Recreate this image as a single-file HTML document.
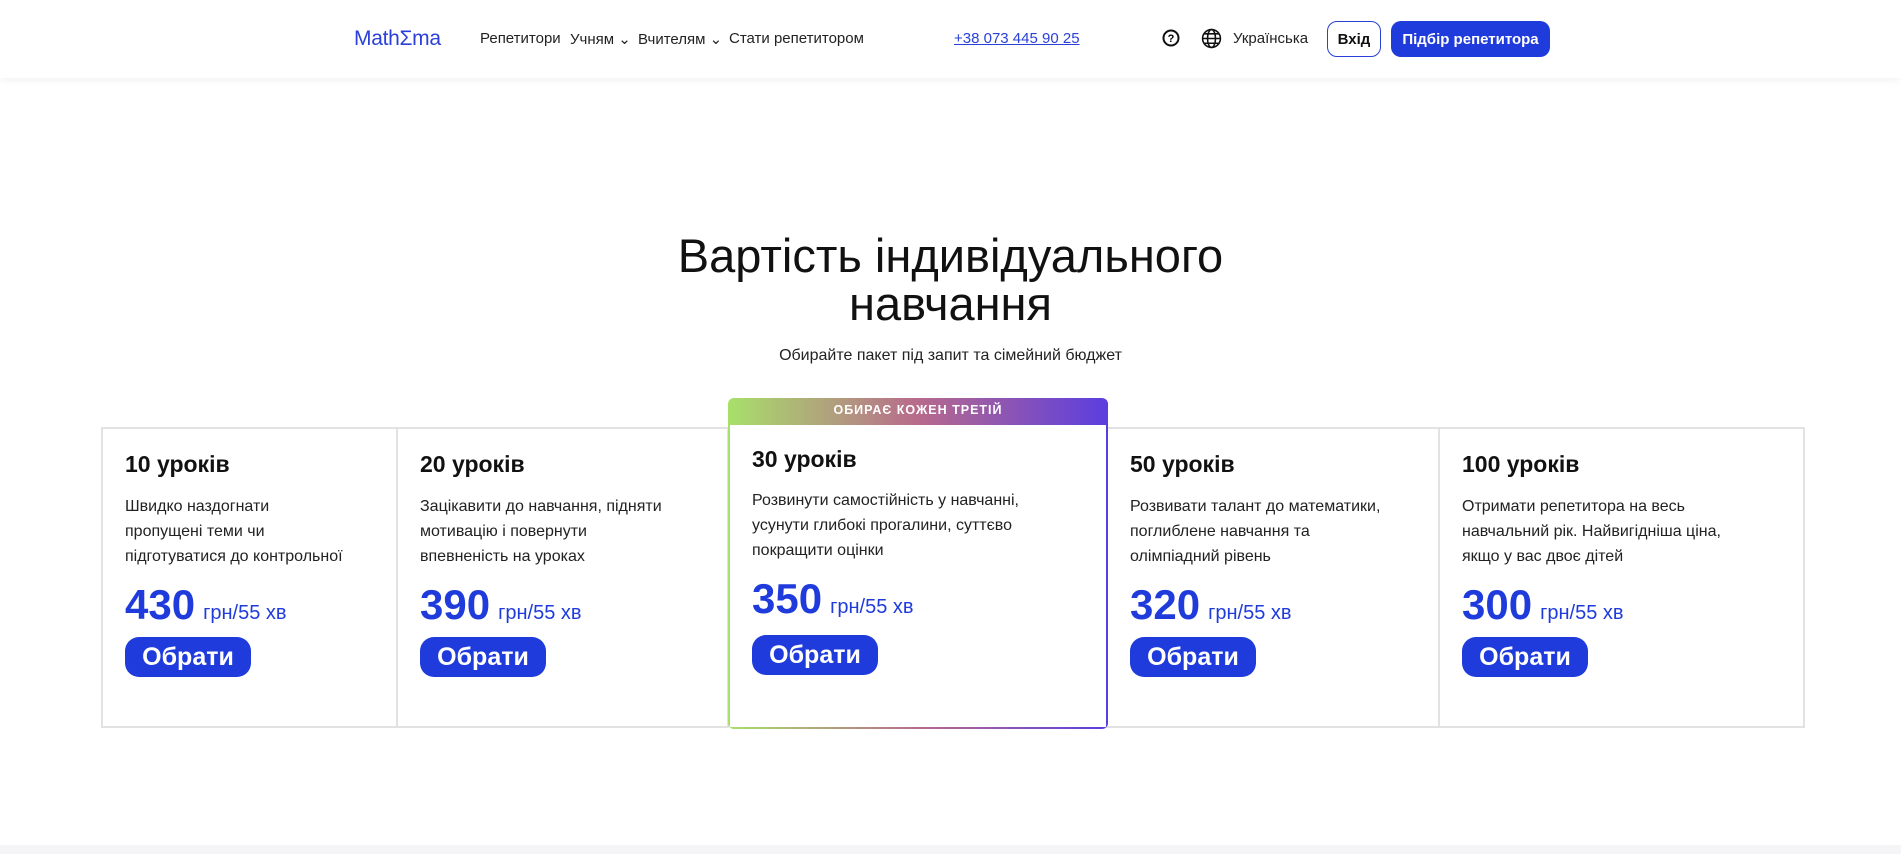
<!DOCTYPE html>
<html><head><meta charset="utf-8"><style>
*{margin:0;padding:0;box-sizing:border-box}
body{width:1901px;height:854px;background:#fff;font-family:"Liberation Sans","Noto Sans CJK SC",sans-serif;color:#111;position:relative;overflow:hidden}
.hdr{position:absolute;left:0;top:0;width:1901px;height:78px;background:#fff;box-shadow:0 2px 8px rgba(0,0,0,.06)}
.a{position:absolute;white-space:nowrap}
.nav{font-size:15px;color:#222;top:30px}
.btn{position:absolute;border-radius:10px;font-size:15px;font-weight:bold;display:flex;align-items:center;justify-content:center}
.card{position:absolute;top:427px;height:301px;border:2px solid #e2e2e2;background:#fff}
.card h3{position:absolute;left:22px;top:22px;font-size:23px;font-weight:bold;color:#111}
.card p{position:absolute;left:22px;top:65px;font-size:16px;line-height:25px;color:#222;width:300px}
.price{position:absolute;left:22px;top:152px;color:#1f3bdc;white-space:nowrap}
.price b{font-size:42px}
.price span{font-size:20px;margin-left:8px}
.ob{position:absolute;left:22px;top:208px;width:126px;height:40px;border-radius:14px;background:#1f3bdc;color:#fff;font-size:25px;font-weight:bold;display:flex;align-items:center;justify-content:center}
</style></head><body>
<div class="hdr">
<div class="a" style="left:354px;top:27px;font-size:21px;color:#2a40d8;letter-spacing:-0.3px">MathΣma</div>
<div class="a nav" style="left:480px">Репетитори</div>
<div class="a nav" style="left:570px">Учням ⌄</div>
<div class="a nav" style="left:638px">Вчителям ⌄</div>
<div class="a nav" style="left:729px">Стати репетитором</div>
<div class="a nav" style="left:954px;color:#2a40d8;text-decoration:underline">+38 073 445 90 25</div>
<svg class="a" style="left:1162px;top:29px" width="18" height="18" viewBox="0 0 18 18"><circle cx="9" cy="9" r="7.5" fill="none" stroke="#111" stroke-width="2"/><text x="9" y="13" font-size="11" font-weight="bold" text-anchor="middle" font-family="Liberation Sans">?</text></svg>
<svg class="a" style="left:1201px;top:28px" width="21" height="21" viewBox="0 0 20 20" fill="none" stroke="#111" stroke-width="1.5"><circle cx="10" cy="10" r="8.5"/><ellipse cx="10" cy="10" rx="3.8" ry="8.5"/><path d="M1.5 10h17M3 5.5h14M3 14.5h14"/></svg>
<div class="a nav" style="left:1233px">Українська</div>
<div class="btn" style="left:1327px;top:21px;width:54px;height:36px;border:1.5px solid #2a40d8;color:#111">Вхід</div>
<div class="btn" style="left:1391px;top:21px;width:159px;height:36px;background:#1f3bdc;color:#fff">Підбір репетитора</div>
</div>
<div class="a" style="left:0;width:1901px;top:232px;text-align:center;font-size:47px;line-height:48px;color:#111">Вартість індивідуального<br>навчання</div>
<div class="a" style="left:0;width:1901px;top:347px;text-align:center;font-size:16px;color:#222">Обирайте пакет під запит та сімейний бюджет</div>

<div class="card" style="left:101px;width:297px"><h3>10 уроків</h3><p>Швидко наздогнати<br>пропущені теми чи<br>підготуватися до контрольної</p><div class="price"><b>430</b><span>грн/55 хв</span></div><div class="ob">Обрати</div></div>
<div class="card" style="left:396px;width:333px"><h3>20 уроків</h3><p>Зацікавити до навчання, підняти<br>мотивацію і повернути<br>впевненість на уроках</p><div class="price"><b>390</b><span>грн/55 хв</span></div><div class="ob">Обрати</div></div>
<div class="card" style="left:1106px;width:334px"><h3>50 уроків</h3><p>Розвивати талант до математики,<br>поглиблене навчання та<br>олімпіадний рівень</p><div class="price"><b>320</b><span>грн/55 хв</span></div><div class="ob">Обрати</div></div>
<div class="card" style="left:1438px;width:367px"><h3>100 уроків</h3><p>Отримати репетитора на весь<br>навчальний рік. Найвигідніша ціна,<br>якщо у вас двоє дітей</p><div class="price"><b>300</b><span>грн/55 хв</span></div><div class="ob">Обрати</div></div>

<div class="a" style="left:728px;top:398px;width:380px;height:331px;border-radius:6px;background:linear-gradient(90deg,#a8e06a,#b86a8c 50%,#5b3ee0)"></div>
<div class="a" style="left:728px;width:380px;top:403px;text-align:center;font-size:12.5px;font-weight:bold;letter-spacing:1px;color:#fff">ОБИРАЄ КОЖЕН ТРЕТІЙ</div>
<div class="card" style="left:730px;top:425px;width:376px;height:302px;border:none">
<h3 style="top:21px">30 уроків</h3><p style="top:63px">Розвинути самостійність у навчанні,<br>усунути глибокі прогалини, суттєво<br>покращити оцінки</p><div class="price" style="top:150px"><b>350</b><span>грн/55 хв</span></div><div class="ob" style="top:210px">Обрати</div></div>

<div class="a" style="left:0;top:845px;width:1901px;height:9px;background:#f5f5f7"></div>
</body></html>
